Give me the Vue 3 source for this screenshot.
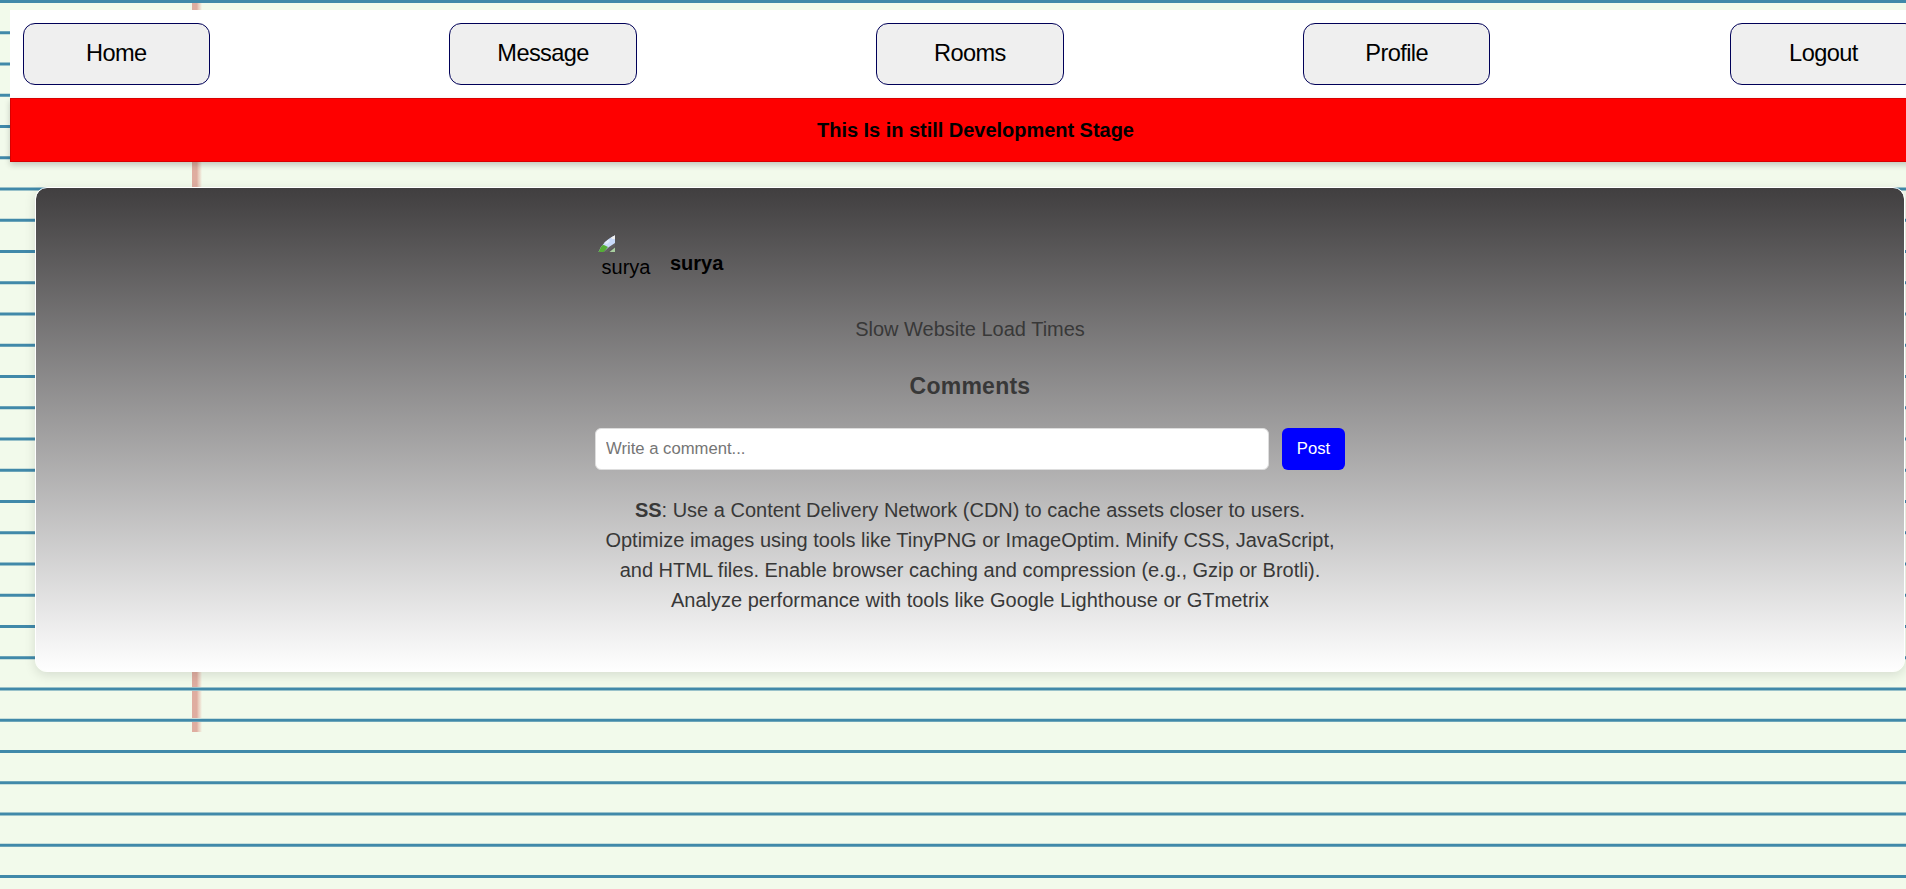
<script setup>
const links = ['Home', 'Message', 'Rooms', 'Profile', 'Logout']
</script>

<template>
  <div class="paper">
    <div class="shell">
      <nav class="nav">
        <button v-for="link in links" :key="link" class="nav-button">{{ link }}</button>
      </nav>
      <div class="banner">This Is in still Development Stage</div>
    </div>

    <article class="card">
      <div class="content">
        <header class="author">
          <div class="avatar">
            <svg class="avatar-icon" width="20" height="20" viewBox="0 0 20 20">
              <path d="M0 0H20V13L11 20H0Z" fill="#c9dafa" />
              <path d="M15 3H20V7H17Z" fill="#f1f1f1" />
              <path d="M8 11L13 7L15 9L12 12Z" fill="#e3ecfd" />
              <path d="M0 20V14Q7 10.500 13 15L9 20Z" fill="#55ad37" />
              <path d="M20 11V14L12 20H8.500L14 15Z" fill="#625f60" />
              <path d="M20 15.500V20H14.500Z" fill="#a9cf9f" />
            </svg>
            <span class="avatar-alt">surya</span>
          </div>
          <strong class="name">surya</strong>
        </header>
        <p class="post-text">Slow Website Load Times</p>
        <h3 class="heading">Comments</h3>
        <form class="form" @submit.prevent>
          <input class="field" type="text" placeholder="Write a comment..." />
          <button class="post-button" type="submit">Post</button>
        </form>
        <p class="comment">
          <strong>SS</strong>: Use a Content Delivery Network (CDN) to cache assets closer to users.
          Optimize images using tools like TinyPNG or ImageOptim. Minify CSS, JavaScript, and HTML
          files. Enable browser caching and compression (e.g., Gzip or Brotli). Analyze performance
          with tools like Google Lighthouse or GTmetrix
        </p>
      </div>
    </article>
  </div>
</template>

<style>
body {
  margin: 0;
  overflow: hidden;
}
</style>

<style scoped>
.paper {
  --ink: #4189a9;
  --ink75: #6da5b9;
  --ink50: #9ac2ca;
  --ink25: #c6deda;
  box-sizing: border-box;
  height: 889px;
  padding: 10px 0 0 10px;
  overflow: hidden;
  background-color: #f2faeb;
  /* ruled lines every 31.25px, then the red margin line */
  background-image:
    linear-gradient(
      var(--ink) 0 3px,
      transparent 3px 31px,
      var(--ink75) 31px 32px,
      var(--ink) 32px 34px,
      var(--ink25) 34px 35px,
      transparent 35px 62px,
      var(--ink50) 62px 63px,
      var(--ink) 63px 65px,
      var(--ink50) 65px 66px,
      transparent 66px 93px,
      var(--ink25) 93px 94px,
      var(--ink) 94px 96px,
      var(--ink75) 96px 97px,
      transparent 97px
    ),
    linear-gradient(90deg, #dfada0 0 5px, #e7c5b6 6px, #eddccd 8px, #f2faeb 10px);
  background-size: 100% 125px, 10px 732px;
  background-position: 0 0, 192px 0;
  background-repeat: repeat, no-repeat;
  font-family: "Liberation Sans", Arial, sans-serif;
  font-size: 20px;
  color: #383838;
}

.shell {
  width: 1931px;
}

.nav {
  box-sizing: border-box;
  display: flex;
  justify-content: space-between;
  width: 1920px;
  height: 88px;
  padding: 13px 12.8px 13px 12.6px;
  background: #fff;
}

.nav-button {
  box-sizing: border-box;
  width: 187.5px;
  height: 62px;
  padding: 0 0 2px;
  border: 1px solid #000058;
  border-radius: 12px;
  background: #efefef;
  font-family: inherit;
  font-size: 23.6px;
  letter-spacing: -0.6px;
  color: #000;
}

.banner {
  box-sizing: border-box;
  height: 64px;
  border: 1px solid #d80000;
  background: #fe0000;
  box-shadow: 0 3px 6px rgba(0, 0, 0, 0.2);
  font-weight: bold;
  letter-spacing: -0.03px;
  line-height: 62px;
  text-align: center;
  color: #000;
}

.card {
  box-sizing: border-box;
  width: 1870px;
  height: 485px;
  margin: 25px 0 0 25px;
  padding-top: 44px;
  border: 1px solid #fff;
  border-radius: 12px;
  background: linear-gradient(#403e3f, #fff) border-box;
  background-clip: padding-box;
  box-shadow: 0 3px 12px rgba(0, 0, 0, 0.12);
}

.content {
  width: 750px;
  margin: 0 auto;
  text-align: center;
}

.author {
  display: flex;
  gap: 13px;
  height: 62px;
  color: #000;
}

.avatar {
  width: 62px;
  height: 62px;
  overflow: hidden;
  clip-path: circle(31px at 32px 32px);
}

.avatar-icon {
  display: block;
}

.avatar-alt {
  display: block;
  margin-top: 4px;
  line-height: 23px;
}

.name {
  line-height: 62px;
}

.post-text {
  margin: 20px 0 0;
  line-height: 30px;
}

.heading {
  margin: 24px 0 0;
  font-size: 23px;
  letter-spacing: 0.25px;
  line-height: 36px;
}

.form {
  display: flex;
  gap: 13px;
  margin-top: 24px;
}

.field {
  box-sizing: border-box;
  flex: 1;
  min-width: 0;
  height: 42px;
  padding: 0 10px;
  border: 1px solid #ddd;
  border-radius: 6px;
  background: #fff;
  font-family: inherit;
  font-size: 16.67px;
}

.field::placeholder {
  color: #757575;
}

.post-button {
  width: 63px;
  height: 42px;
  padding: 0 0 1px;
  border: 0;
  border-radius: 6px;
  background: #00f;
  font-family: inherit;
  font-size: 16.67px;
  color: #fff;
}

.comment {
  margin: 25px 0 0;
  padding: 0 10px;
  line-height: 30px;
}
</style>
